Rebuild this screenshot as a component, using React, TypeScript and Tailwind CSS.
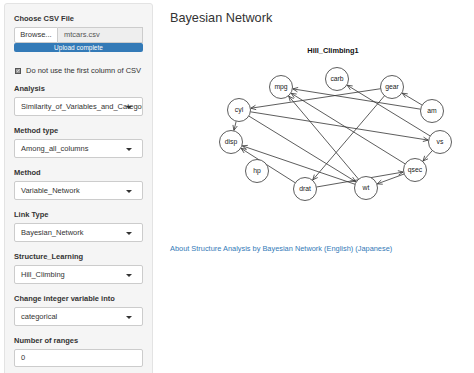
import React from 'react';

const nodes: Record<string, [number, number]> = {
  mpg: [281, 87],
  carb: [337, 79],
  gear: [392, 87],
  am: [432, 111],
  cyl: [239, 110],
  vs: [440, 142],
  disp: [231, 142],
  qsec: [415, 170],
  hp: [257, 171],
  drat: [305, 189],
  wt: [366, 188],
};

const edges: [string, string][] = [
  ['gear', 'cyl'],
  ['am', 'mpg'],
  ['am', 'gear'],
  ['gear', 'drat'],
  ['vs', 'carb'],
  ['cyl', 'vs'],
  ['cyl', 'disp'],
  ['cyl', 'wt'],
  ['wt', 'mpg'],
  ['qsec', 'mpg'],
  ['vs', 'qsec'],
  ['wt', 'disp'],
  ['drat', 'disp'],
  ['drat', 'qsec'],
  ['qsec', 'wt'],
];

const R = 11.5;

function Edge({ from, to }: { from: string; to: string }) {
  const [x1, y1] = nodes[from];
  const [x2, y2] = nodes[to];
  const len = Math.hypot(x2 - x1, y2 - y1);
  const ux = (x2 - x1) / len;
  const uy = (y2 - y1) / len;
  const sx = x1 + ux * R;
  const sy = y1 + uy * R;
  const ex = x2 - ux * (R + 0.5);
  const ey = y2 - uy * (R + 0.5);
  const a = Math.atan2(uy, ux);
  const h = 5.5;
  const w = 0.42;
  const ax1 = ex - h * Math.cos(a - w);
  const ay1 = ey - h * Math.sin(a - w);
  const ax2 = ex - h * Math.cos(a + w);
  const ay2 = ey - h * Math.sin(a + w);
  return (
    <g stroke="#333" strokeWidth={0.8} fill="none">
      <line x1={sx} y1={sy} x2={ex} y2={ey} />
      <polyline points={`${ax1},${ay1} ${ex},${ey} ${ax2},${ay2}`} />
    </g>
  );
}

function Label({ children }: { children: React.ReactNode }) {
  return <div className="mb-[4px] h-[9px] text-[7.5px] leading-[9px] font-bold text-[#333]">{children}</div>;
}

function Select({ value }: { value: string }) {
  return (
    <div className="relative mb-[10px] flex h-[19px] items-center overflow-hidden rounded-[2px] border border-[#ccc] bg-white pl-[6px] text-[7.5px] text-[#333]">
      <span className="whitespace-nowrap">{value}</span>
      <span className="absolute right-[10px] top-[8px] h-0 w-0 border-l-[3px] border-r-[3px] border-t-[3px] border-l-transparent border-r-transparent border-t-[#333]" />
    </div>
  );
}

export default function App() {
  return (
    <div className="flex h-[373px] w-[474px] overflow-hidden bg-white font-['Liberation_Sans',Arial,sans-serif]">
      {/* sidebar */}
      <div className="ml-[4px] mt-[3px] h-[400px] w-[149px] shrink-0 rounded-[3px] border border-[#e3e3e3] bg-[#f5f5f5] px-[9px] pt-[10px]">
        <Label>Choose CSV File</Label>
        <div className="flex h-[16px] text-[7.5px]">
          <div className="flex w-[44px] items-center justify-center rounded-l-[2px] border border-[#ccc] bg-white text-[#333]">
            Browse...
          </div>
          <div className="flex flex-1 items-center border border-l-0 border-[#ccc] bg-[#eee] pl-[6px] text-[#555]">
            mtcars.csv
          </div>
        </div>
        <div className="flex h-[9px] items-center justify-center rounded-[2px] bg-[#337ab7] text-[6.5px] text-white">
          Upload complete
        </div>
        <div className="mt-[14px] flex h-[9px] items-center gap-[5px] pl-[1px] text-[7.5px] text-[#333]">
          <span className="relative flex h-[6px] w-[6px] items-center justify-center border border-[#555] bg-[#999]">
            <svg width="5" height="5" viewBox="0 0 5 5">
              <polyline points="0.8,2.6 2,3.8 4.2,1" stroke="#eee" strokeWidth="1" fill="none" />
            </svg>
          </span>
          <span>Do not use the first column of CSV</span>
        </div>
        <div className="mt-[9px]">
          <Label>Analysis</Label>
          <Select value="Similarity_of_Variables_and_Categor" />
          <Label>Method type</Label>
          <Select value="Among_all_columns" />
          <Label>Method</Label>
          <Select value="Variable_Network" />
          <Label>Link Type</Label>
          <Select value="Bayesian_Network" />
          <Label>Structure_Learning</Label>
          <Select value="Hill_Climbing" />
          <Label>Change integer variable into</Label>
          <Select value="categorical" />
          <Label>Number of ranges</Label>
          <div className="flex h-[18px] items-center rounded-[2px] border border-[#ccc] bg-white pl-[6px] text-[7.5px] text-[#333]">
            0
          </div>
        </div>
      </div>

      {/* main */}
      <div className="flex-1 pl-[17px] pt-[10px]">
        <h2 className="text-[12.7px] leading-[16px] text-[#333]">Bayesian Network</h2>
        <svg className="ml-[30px] block" width="270" height="184" viewBox="200 26 270 184">
          <text x="333" y="53" textAnchor="middle" fontSize="7.4" fontWeight="bold" fill="#111" fontFamily="Liberation Sans, Arial, sans-serif">
            Hill_Climbing1
          </text>
          {edges.map(([f, t]) => (
            <Edge key={f + t} from={f} to={t} />
          ))}
          {Object.entries(nodes).map(([name, [x, y]]) => (
            <g key={name}>
              <circle cx={x} cy={y} r={R} fill="white" stroke="#333" strokeWidth={0.8} />
              <text x={x} y={y + 2.3} textAnchor="middle" fontSize="6.8" fill="#222" fontFamily="Liberation Sans, Arial, sans-serif">
                {name}
              </text>
            </g>
          ))}
        </svg>
        <a className="mt-[34px] block text-[7.4px] leading-[9px] text-[#337ab7]" href="#">
          About Structure Analysis by Bayesian Network (English) (Japanese)
        </a>
      </div>
    </div>
  );
}
